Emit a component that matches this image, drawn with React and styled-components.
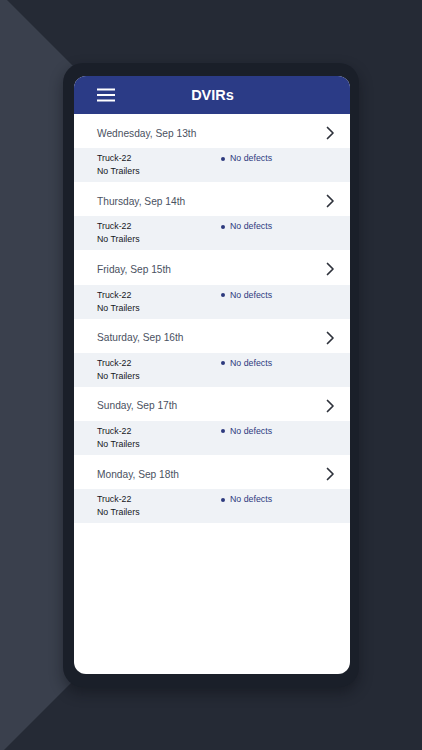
import React from 'react';
import styled, { createGlobalStyle } from 'styled-components';

const GlobalStyle = createGlobalStyle`
  html, body {
    margin: 0;
    padding: 0;
    background-color: #252a35;
  }
  body {
    font-family: "Liberation Sans", Arial, sans-serif;
  }
`;

const Page = styled.div`
  position: relative;
  width: 422px;
  height: 750px;
  display: flex;
  justify-content: center;
  align-items: center;
  background-color: #252a35;
  overflow: hidden;

  &::before {
    content: '';
    position: absolute;
    inset: 0;
    background-color: #3a404d;
    clip-path: polygon(0 0, 7px 0, 74px 67px, 74px 680px, 4px 750px, 0 750px);
  }
`;

const Phone = styled.div`
  position: relative;
  width: 296px;
  height: 624px;
  box-sizing: border-box;
  padding: 13px 9px 13px 11px;
  background-color: #1a1f29;
  border-radius: 20px;
  box-shadow: 0 6px 14px rgba(10, 13, 20, 0.45);
  display: flex;
`;

const Screen = styled.div`
  flex: 1;
  background-color: #ffffff;
  border-radius: 12px;
  overflow: hidden;
  display: flex;
  flex-direction: column;
`;

const Header = styled.div`
  height: 38px;
  flex-shrink: 0;
  background-color: #2b3b86;
  display: grid;
  grid-template-columns: 40px 1fr 40px;
  align-items: center;
  padding: 0 0 0 23px;
  box-sizing: border-box;
`;

const Title = styled.h1`
  margin: 0;
  text-align: center;
  color: #ffffff;
  font-size: 14.5px;
  font-weight: 700;
  position: relative;
  left: -11px;
`;

const Entry = styled.div`
  display: flex;
  flex-direction: column;
  flex-shrink: 0;
`;

const DateRow = styled.div`
  height: 34.2px;
  display: flex;
  align-items: center;
  justify-content: space-between;
  padding: 4px 15px 0 23px;
  box-sizing: border-box;
  color: #4a5161;
  font-size: 10.2px;
`;

const Details = styled.div`
  height: 34px;
  background-color: #eff2f6;
  display: grid;
  grid-template-columns: 124px 1fr;
  padding: 4px 23px 0;
  box-sizing: border-box;
  font-size: 8.8px;
  line-height: 13px;
`;

const Vehicle = styled.div`
  color: #15171c;
  display: flex;
  flex-direction: column;
`;

const Status = styled.div`
  color: #2d3a7e;
  display: flex;
  align-items: flex-start;
  gap: 5px;

  &::before {
    content: '';
    width: 4px;
    height: 4px;
    border-radius: 50%;
    background-color: #2d3a7e;
    margin-top: 4.5px;
  }
`;

const Hamburger = () => (
  <svg width="18" height="14" viewBox="0 0 18 14">
    <g stroke="#ffffff" strokeWidth="2.2" strokeLinecap="butt">
      <line x1="0" y1="1.5" x2="18" y2="1.5" />
      <line x1="0" y1="7" x2="18" y2="7" />
      <line x1="0" y1="12.5" x2="18" y2="12.5" />
    </g>
  </svg>
);

const Chevron = () => (
  <svg width="10" height="14" viewBox="0 0 10 14">
    <path d="M2.5 1.5 L8 7 L2.5 12.5" fill="none" stroke="#2e323b" strokeWidth="1.7" strokeLinecap="round" strokeLinejoin="round" />
  </svg>
);

const days = [
  'Wednesday, Sep 13th',
  'Thursday, Sep 14th',
  'Friday, Sep 15th',
  'Saturday, Sep 16th',
  'Sunday, Sep 17th',
  'Monday, Sep 18th',
];

const App = () => (
  <Page>
    <GlobalStyle />
    <Phone>
      <Screen>
        <Header>
          <Hamburger />
          <Title>DVIRs</Title>
          <span />
        </Header>
        {days.map((day) => (
          <Entry key={day}>
            <DateRow>
              <span>{day}</span>
              <Chevron />
            </DateRow>
            <Details>
              <Vehicle>
                <span>Truck-22</span>
                <span>No Trailers</span>
              </Vehicle>
              <Status>No defects</Status>
            </Details>
          </Entry>
        ))}
      </Screen>
    </Phone>
  </Page>
);

export default App;
